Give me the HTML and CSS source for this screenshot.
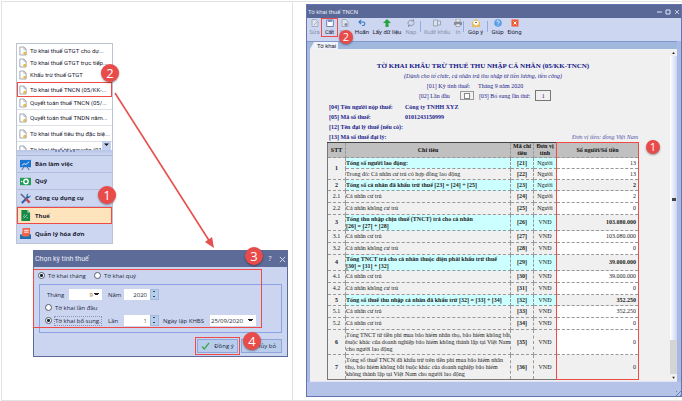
FILE: index.html
```html
<!DOCTYPE html>
<html lang="vi">
<head>
<meta charset="utf-8">
<title>Tờ khai thuế TNCN</title>
<link rel="stylesheet" href="styles.css">
</head>
<body>
<svg class="defs" aria-hidden="true">
  <symbol id="doc" viewBox="0 0 9 10"><path d="M1 .5h4.500L8 3v6.500H1z" fill="#fff" stroke="#7f8796" stroke-width=".8"/><path d="M5.500.5V3H8" fill="none" stroke="#7f8796" stroke-width=".6"/><circle cx="6.500" cy="7.500" r="1.700" fill="#e9b949"/></symbol>
</svg>
<main class="guide">
  <section class="cell steps">
    <nav class="panel">
      <ul class="forms">
        <li><a href="#f1"><svg><use href="#doc"/></svg>Tờ khai thuế GTGT cho dự...</a></li>
        <li><a href="#f2"><svg><use href="#doc"/></svg>Tờ khai thuế GTGT trực tiếp...</a></li>
        <li><a href="#f3"><svg><use href="#doc"/></svg>Khấu trừ thuế GTGT</a></li>
        <li class="marked"><a href="#f4"><svg><use href="#doc"/></svg>Tờ khai thuế TNCN (05/KK-...</a></li>
        <li><a href="#f5"><svg><use href="#doc"/></svg>Quyết toán thuế TNCN (05/...</a></li>
        <li class="split"><a href="#f6"><svg><use href="#doc"/></svg>Quyết toán thuế TNDN năm...</a></li>
        <li class="split"><a href="#f7"><svg><use href="#doc"/></svg>Tờ khai thuế tiêu thụ đặc biệ...</a></li>
        <li class="split"><a href="#f8"><svg><use href="#doc"/></svg>Tờ khai thuế tài nguyên (01...</a></li>
      </ul>
      <button class="more" aria-label="Cuộn xuống"><svg viewBox="0 0 9 9"><path d="M2 2.500h5L4.500 5z" fill="#111"/></svg></button>
      <div class="grip"></div>
      <ul class="modules">
        <li><a href="#m1"><svg viewBox="0 0 12 12"><path d="M0 1h12v8H0z" fill="#1976d2"/><path d="M2 7l2.500-2 2 1L10 3" stroke="#fff" fill="none" stroke-width=".9"/><path d="M4 9l-2 3M8 9l2 3" stroke="#3b5b86"/></svg>Bàn làm việc</a></li>
        <li><a href="#m2"><svg viewBox="0 0 12 12"><path d="M0 2h12v8H0z" fill="#1f9d57"/><circle cx="6.500" cy="6" r="2.400" fill="none" stroke="#fff" stroke-width="1.500"/><circle cx="1.800" cy="6" r=".8" fill="#fff"/></svg>Quỹ</a></li>
        <li><a href="#m3"><svg viewBox="0 0 12 12"><path d="M2 11l7-7" stroke="#2c5fa8" stroke-width="2.200"/><path d="M11.500 2.500L9.500 4 8 2.500 9.500.6A3 3 0 0 0 6.800 3.500L8.500 5.500A3 3 0 0 0 11.500 2.500z" fill="#2c5fa8"/><path d="M1 1l5 5" stroke="#566584" stroke-width="1.600"/><path d="M6.500 6.500l4 4" stroke="#c9495a" stroke-width="2.600"/></svg>Công cụ dụng cụ</a></li>
        <li class="current"><a href="#m4"><svg viewBox="0 0 12 12"><path d="M1.500 0H8l3 3v9H1.500z" fill="#16894a"/><path d="M8 0v3h3z" fill="#8ed0a9"/><path d="M4 9l4-4M4 5.500h1.500M7 8.500h1.500M3.500 7.200h1" stroke="#c4ead3" stroke-width=".8"/></svg>Thuế</a></li>
        <li><a href="#m5"><svg viewBox="0 0 12 12"><path d="M3 0h8v9H2z" fill="#f0644a"/><path d="M4.500 2.500h5M4.500 4.500h5" stroke="#fff"/><path d="M0 7h3l1 2h4l1-2h3v5H0z" fill="#1f6fae"/><path d="M2 7h8v2H2z" fill="#f0644a"/></svg>Quản lý hóa đơn</a></li>
      </ul>
      <span class="badge b-form">2</span>
      <span class="badge b-module">1</span>
    </nav>
    <svg class="arrow" viewBox="0 0 102 158"><path d="M1 1l95 149" stroke="#e5504d" stroke-width="1.600"/><path d="M100 156l-9-6 7-5z" fill="#e5504d"/></svg>
    <form class="dialog">
      <header><h2>Chọn kỳ tính thuế</h2><button type="button" aria-label="Trợ giúp">?</button><button type="button" aria-label="Đóng"><svg viewBox="0 0 8 8"><path d="M1 1l6 6M7 1L1 7" stroke="#e2e6f4"/></svg></button></header>
      <div class="period">
        <label><input type="radio" name="kind" checked>Tờ khai tháng</label>
        <label><input type="radio" name="kind">Tờ khai quý</label>
      </div>
      <fieldset>
        <div class="line">
          <label class="c1" for="month">Tháng</label>
          <select id="month"><option>9</option></select>
          <label class="c2" for="year">Năm</label>
          <span class="spin"><input id="year" type="text" value="2020"><i></i></span>
        </div>
        <div class="line"><label><input type="radio" name="stage">Tờ khai lần đầu</label></div>
        <div class="line">
          <label class="extra"><input type="radio" name="stage" checked><span>Tờ khai bổ sung.</span></label>
          <label class="c2" for="times">Lần</label>
          <span class="spin pale"><input id="times" type="text" value="1"><i></i></span>
          <label class="c3" for="made">Ngày lập KHBS</label>
          <select id="made"><option>25/09/2020</option></select>
        </div>
      </fieldset>
      <footer>
        <button type="button" class="ok"><svg viewBox="0 0 9 8"><path d="M1 4.500L3.300 7 8 1" fill="none" stroke="#3fa653" stroke-width="1.300"/></svg>Đồng ý</button>
        <button type="button" class="cancel">Hủy bỏ</button>
      </footer>
      <div class="mark"></div>
      <span class="badge b-dialog">3</span>
      <span class="badge b-ok">4</span>
    </form>
  </section>

  <section class="cell result">
    <div class="window">
      <header class="bar"><h1>Tờ khai thuế TNCN</h1>
        <button aria-label="Thu nhỏ"><svg viewBox="0 0 6 6"><path d="M1 3h5" stroke="#dfe4f5"/></svg></button>
        <button aria-label="Phóng to"><svg viewBox="0 0 6 6"><path d="M1 1h4v4H1z" fill="none" stroke="#dfe4f5"/></svg></button>
        <button aria-label="Đóng"><svg viewBox="0 0 6 6"><path d="M1 1l4 4M5 1L1 5" stroke="#dfe4f5" stroke-width=".8"/></svg></button>
      </header>
      <div class="tools">
        <button class="off"><svg viewBox="0 0 8 8"><path d="M1 .5h4L7 3v4.500H1z" fill="#dfe3ee" stroke="#a6adbd"/><path d="M3 6l3-3" stroke="#a6adbd"/></svg>Sửa</button>
        <button class="save"><svg viewBox="0 0 8 8"><path d="M.7 1h6.600v6.500H.7z" fill="#fff" stroke="#6d7fae"/><path d="M2 1h4v2H2z" fill="#7d90c4"/></svg>Cất</button>
        <button class="off"><svg viewBox="0 0 8 8"><path d="M1 .5h4L7 3v4.500H1z" fill="#dfe3ee" stroke="#a6adbd"/><circle cx="5" cy="5.500" r="1.500" fill="#858da0"/></svg>Xóa</button>
        <button class="undo"><svg viewBox="0 0 8 8"><path d="M1 3h4.500a1.800 1.800 0 0 1 0 3.500H4M3 1L1 3l2 2" fill="none" stroke="#337dc4" stroke-width="1.100"/></svg>Hoãn</button>
        <button class="fetch"><svg viewBox="0 0 8 8"><path d="M4 0l4 4H5.500v4h-3V4H0z" fill="#27a33b"/></svg>Lấy dữ liệu</button>
        <button class="off load"><svg viewBox="0 0 8 8"><path d="M1.200 5.500A3.200 3.200 0 0 1 6 1.700M6.800 2.500A3.200 3.200 0 0 1 2 6.300M6.500 0v2H4.500M1.500 8V6h2" fill="none" stroke="#8f98ac"/></svg>Nạp</button>
        <span class="sep"></span>
        <button class="off export"><svg viewBox="0 0 8 8"><path d="M.5 1h4v6h-4zM4.500 2h3v4h-3z" fill="#dde2ee" stroke="#9ba4b8"/></svg>Xuất khẩu</button>
        <button class="off print"><svg viewBox="0 0 8 8"><path d="M2 0h4v3H2z" fill="#eee" stroke="#878d9b" stroke-width=".7"/><path d="M0 3h8v3H0z" fill="#878d9b"/><path d="M2 5h4v2.500H2z" fill="#f4f4f4" stroke="#878d9b" stroke-width=".7"/></svg>In</button>
        <span class="sep"></span>
        <button class="talk"><svg viewBox="0 0 8 8"><path d="M0 3l4-3 4 3v5H0z" fill="#e7bd62"/><path d="M1.500 2h5v3L4 6.500 1.500 5z" fill="#fff"/><path d="M3 3.500h2" stroke="#666"/></svg>Góp ý</button>
        <span class="sep"></span>
        <button class="help"><svg viewBox="0 0 8 8"><circle cx="4" cy="4" r="3.800" fill="#5b9ee5"/><path d="M2.800 3a1.200 1.200 0 1 1 1.800 1q-.6.4-.6 1M4 5.700v.8" fill="none" stroke="#fff" stroke-width=".8"/></svg>Giúp</button>
        <button><svg viewBox="0 0 8 8"><path d="M.5.5h7v7h-7z" fill="#ee5b32"/><path d="M2.500 2.500l3 3M5.500 2.500l-3 3" stroke="#fff"/></svg>Đóng</button>
        <span class="badge small b-save">2</span>
      </div>
      <div class="tabs"><span>Tờ khai</span></div>
      <div class="view">
        <article class="sheet">
          <h2>TỜ KHAI KHẤU TRỪ THUẾ THU NHẬP CÁ NHÂN (05/KK-TNCN)</h2>
          <p class="note">(Dành cho tổ chức, cá nhân trả thu nhập từ tiền lương, tiền công)</p>
          <p class="when"><span>[01] Kỳ tính thuế:</span><span>Tháng 9 năm 2020</span></p>
          <p class="turn"><label for="first">[02] Lần đầu</label><span class="box"><input type="checkbox" id="first"></span><label for="nth">[03] Bổ sung lần thứ:</label><input type="text" id="nth" value="1"></p>
          <dl>
            <dt>[04] Tên người nộp thuế:</dt><dd>Công ty TNHH XYZ</dd>
            <dt>[05] Mã số thuế:</dt><dd>0101243150999</dd>
            <dt>[12] Tên đại lý thuế (nếu có):</dt><dd></dd>
            <dt>[13] Mã số thuế đại lý:</dt><dd class="unit">Đơn vị tiền: đồng Việt Nam</dd>
          </dl>
          <div class="grid">
            <table>
              <colgroup><col class="k1"><col><col class="k3"><col class="k4"><col class="k5"></colgroup>
              <thead><tr><th>STT</th><th>Chỉ tiêu</th><th>Mã chỉ tiêu</th><th>Đơn vị tính</th><th>Số người/Số tiền</th></tr></thead>
              <tbody>
                <tr class="sum open"><th rowspan="2">1</th><td>Tổng số người lao động:</td><td>[21]</td><td>Người</td><td>13</td></tr>
                <tr class="sub"><td>Trong đó: Cá nhân cư trú có hợp đồng lao động</td><td>[22]</td><td>Người</td><td>13</td></tr>
                <tr class="sum"><th>2</th><td>Tổng số cá nhân đã khấu trừ thuế [23] = [24] + [25]</td><td>[23]</td><td>Người</td><td>2</td></tr>
                <tr><th>2.1</th><td>Cá nhân cư trú</td><td>[24]</td><td>Người</td><td>2</td></tr>
                <tr><th>2.2</th><td>Cá nhân không cư trú</td><td>[25]</td><td>Người</td><td>0</td></tr>
                <tr class="sum two"><th>3</th><td>Tổng thu nhập chịu thuế (TNCT) trả cho cá nhân<br>[26] = [27] + [28]</td><td>[26]</td><td>VNĐ</td><td>103.080.000</td></tr>
                <tr><th>3.1</th><td>Cá nhân cư trú</td><td>[27]</td><td>VNĐ</td><td>103.080.000</td></tr>
                <tr><th>3.2</th><td>Cá nhân không cư trú</td><td>[28]</td><td>VNĐ</td><td>0</td></tr>
                <tr class="sum two"><th>4</th><td>Tổng TNCT trả cho cá nhân thuộc diện phải khấu trừ thuế<br>[30] = [31] + [32]</td><td>[29]</td><td>VNĐ</td><td>39.000.000</td></tr>
                <tr><th>4.1</th><td>Cá nhân cư trú</td><td>[30]</td><td>VNĐ</td><td>39.000.000</td></tr>
                <tr><th>4.2</th><td>Cá nhân không cư trú</td><td>[31]</td><td>VNĐ</td><td>0</td></tr>
                <tr class="sum"><th>5</th><td>Tổng số thuế thu nhập cá nhân đã khấu trừ [32] = [33] + [34]</td><td>[32]</td><td>VNĐ</td><td>352.250</td></tr>
                <tr><th>5.1</th><td>Cá nhân cư trú</td><td>[33]</td><td>VNĐ</td><td>352.250</td></tr>
                <tr><th>5.2</th><td>Cá nhân cư trú</td><td>[34]</td><td>VNĐ</td><td>0</td></tr>
                <tr class="long"><th>6</th><td>Tổng TNCT từ tiền phí mua bảo hiểm nhân thọ, bảo hiểm không bắt<br>buộc khác của doanh nghiệp bảo hiểm không thành lập tại Việt Nam<br>cho người lao động</td><td>[35]</td><td>VNĐ</td><td>0</td></tr>
                <tr class="long last"><th>7</th><td>Tổng số thuế TNCN đã khấu trừ trên tiền phí mua bảo hiểm nhân<br>thọ, bảo hiểm không bắt buộc khác của doanh nghiệp bảo hiểm<br>không thành lập tại Việt Nam cho người lao động</td><td>[36]</td><td>VNĐ</td><td>0</td></tr>
              </tbody>
            </table>
            <div class="mark"></div>
            <span class="badge small b-col">1</span>
          </div>
        </article>
        <div class="scroll"><b>▲</b><i></i><b>▼</b></div>
      </div>
      <footer class="foot"></footer>
    </div>
  </section>
</main>
</body>
</html>
```

FILE: styles.css
```css
* { box-sizing: border-box; margin: 0; padding: 0; }
body { background: #fff; color: #1c2233; font: 6px/8px Roboto, "Noto Sans", sans-serif; }
button, input, select { font: inherit; color: inherit; border: 0; border-radius: 0; background: none; appearance: none; }
ul { list-style: none; }
a { color: inherit; text-decoration: none; }
h1, h2 { font: inherit; }
.defs { display: block; width: 0; height: 0; position: absolute; }

.guide { display: grid; grid-template-columns: 290px minmax(0, 1fr); margin: 1px 0 1px 1px; border: 1px solid #e2e2e2; border-right: 0; }
.cell { position: relative; }
.result { border-left: 1px solid #e2e2e2; padding: 2px 0 3px 13px; }
.steps { padding: 41px 4px 0 14px; }

.badge { position: absolute; z-index: 3; width: 18px; height: 18px; border-radius: 50%; background: #e94b4a; color: #fff; font: 13px/18px "Open Sans", sans-serif; text-align: center; box-shadow: 0 1px 2px #0006; }
.badge.small { width: 14px; height: 14px; font-size: 11px; line-height: 14px; }
.mark { position: absolute; z-index: 2; border: 1px solid #f04a46; pointer-events: none; }

.panel { position: relative; width: 97px; border: 1px solid #bcc3d2; background: #ccd6f0; }
.forms { height: 106px; overflow: hidden; background: #fff; white-space: nowrap; padding-top: 1px; }
.forms li { height: 12px; display: flex; align-items: center; }
.forms .split { height: 16px; border-top: 1px solid #dcdfe6; }
.forms .marked { height: 15px; margin-top: 1px; border: 1px solid #f04a46; }
.forms a { display: flex; align-items: center; gap: 3px; padding-left: 2px; }
.forms .marked a { padding-left: 1px; }
.forms svg { width: 8px; height: 10px; flex: none; }
.more { position: absolute; right: 1px; top: 97px; width: 9px; height: 9px; background: #c4d0f0; }
.more svg { display: block; width: 9px; height: 9px; }
.grip { height: 6px; background: linear-gradient(#b8c5e6, #ccd6f0); border-bottom: 1px solid #a8b6dc; }
.grip::before { content: ""; display: block; width: 20px; margin: auto; border-top: 2px dotted #8393bd; }
.modules { font-family: "Open Sans", sans-serif; font-weight: 700; }
.modules li { height: 17px; display: flex; align-items: center; padding-left: 3px; border-bottom: 1px solid #b2bfe2; }
.modules li:last-child { height: 19px; border: 0; }
.modules .current { background: #fde4bd; border: 1px solid #f04a46; padding-left: 2px; }
.modules a { display: flex; align-items: center; gap: 4px; }
.modules svg { width: 11px; height: 11px; }
.b-form { left: 84px; top: 20px; }
.b-module { left: 81px; top: 142px; }
.arrow { position: absolute; z-index: 2; left: 112px; top: 90px; width: 102px; height: 158px; }

.dialog { position: relative; margin: 6px 0 0 17px; height: 107px; border: 1px solid #5d6b99; background: #cbd5f0; color: #232a3d; font-family: "Open Sans", sans-serif; }
.dialog header { height: 16px; display: flex; align-items: center; gap: 4px; padding: 0 1px; background: #5d6b99; color: #e8ebf6; font-size: 7px; }
.dialog header h2 { flex: 1; font-family: Roboto, sans-serif; }
.dialog header button { width: 8px; height: 8px; display: grid; place-items: center; }
.dialog header svg { width: 7px; height: 7px; }
.dialog label { flex: none; display: flex; align-items: center; gap: 3px; white-space: nowrap; }
.dialog [type=radio] { flex: none; width: 7px; height: 7px; border: 1px solid #555d70; border-radius: 50%; background: #fff; }
.dialog [type=radio]:checked { background: radial-gradient(#1c2233 35%, #fff 50%); }
.period { display: flex; gap: 8px; height: 17px; padding-left: 4px; }
.period label:first-child { width: 48px; }
.dialog fieldset { margin: 0 5px; height: 49px; border: 1px solid #8ba3e4; padding: 3px 0 0 5px; }
.line { display: flex; align-items: center; height: 13px; }
.line .c1 { width: 24px; padding-left: 2px; }
.line .c2 { width: 16px; }
.line .c3 { width: 47px; margin-left: 4px; }
.dialog select { height: 11px; padding: 0 9px 0 2px; background: linear-gradient(#222 0 0) right 3px top 4px / 5px 1px no-repeat, linear-gradient(#222 0 0) right 4px top 5px / 3px 1px no-repeat, #fff; }
.dialog #month { width: 33px; margin-right: 6px; text-align: right; text-align-last: right; color: #9b5a23; }
.dialog #made { width: 46px; padding-left: 1px; }
.spin { display: flex; width: 35px; height: 11px; background: #fff; }
.spin input { flex: 1; min-width: 0; text-align: right; padding-right: 3px; }
.pale input { color: #666; }
.spin i { width: 9px; background: radial-gradient(#345 1px, #0000 1px) 0 -1px / 7px 5px, #b7cdec; border: 1px solid #a3b9de; }
.extra { width: 63px; }
.extra span { outline: 1px dotted #8d97b5; }
.dialog footer { display: flex; justify-content: flex-end; gap: 3px; padding: 6px 5px 0; }
.dialog footer button { width: 41px; height: 14px; display: flex; align-items: center; justify-content: center; gap: 4px; background: #b9ccec; border: 1px solid #8fa7d8; }
.dialog footer .ok { outline: 1px solid #f04a46; outline-offset: 1px; }
.dialog footer .cancel { justify-content: flex-end; padding-right: 5px; }
.dialog footer svg { width: 9px; height: 8px; }
.dialog .mark { left: -1px; right: 25px; top: 18px; height: 59px; }
.b-dialog { right: 24px; top: -4px; }
.b-ok { right: 26px; top: 81px; }

.window { border: 1px solid #6575ad; background: #aab9e3; }
.bar { height: 13px; display: flex; align-items: center; gap: 3px; padding: 0 1px; background: #596896; color: #e3e7f4; }
.bar h1 { flex: 1; }
.bar button, .bar svg { width: 6px; height: 6px; display: block; }
.tools { position: relative; display: flex; align-items: flex-start; height: 23px; padding-top: 1px; background: #ccd6f1; }
.tools button { width: 15px; display: flex; flex-direction: column; align-items: center; gap: 1px; white-space: nowrap; line-height: 7px; }
.tools svg { width: 8px; height: 8px; }
.tools .off { color: #8b94aa; }
.tools .save { height: 17px; outline: 1px solid #f04a46; }
.tools .undo { width: 20px; }
.tools .fetch { width: 30px; }
.tools .load { width: 18px; }
.tools .export { width: 32px; }
.tools .print { width: 10px; }
.tools .talk { width: 23px; }
.tools .help { width: 19px; }
.tools .sep { width: 1px; height: 11px; margin-top: 2px; background: #8daee0; }
.b-save { left: 32px; top: 12px; }
.tabs { height: 8px; padding-left: 3px; background: #a0b7de; border-top: 1px solid #8298cc; margin-right: 4px; }
.tabs span { display: block; width: 28px; height: 7px; padding-left: 7px; background: #f0f3fa; clip-path: polygon(4px 0, 100% 0, 100% 100%, 0 100%); line-height: 7px; white-space: nowrap; }
.view { display: flex; margin: 0 4px 0 3px; border-bottom: 1px solid #dfe5f5; background: #f0f0f0; }
.scroll { width: 7px; display: flex; flex-direction: column; background: #d5d5d5; font-size: 4px; line-height: 7px; text-align: center; color: #111; }
.scroll b { background: #f0f0f0; height: 7px; }
.scroll i { height: 284px; background: linear-gradient(#444 0 0) center 142px / 4px 3px no-repeat, linear-gradient(90deg, #fff, #cad5f3); }
.scroll b:last-child { margin-top: auto; }
.foot { height: 14px; background: repeating-linear-gradient(135deg, #6d7fb8 0 1px, #0000 1px 3px) right bottom / 5px 5px no-repeat, #b6c3e9; }

.sheet { flex: 1; min-width: 0; padding: 12px 31px 1px 17px; font: 6px/8px "Liberation Serif", serif; color: #22228c; white-space: nowrap; }
.sheet h2 { font-size: 7px; line-height: 10px; font-weight: 700; text-align: center; color: #14148a; }
.note { font-style: italic; text-align: center; line-height: 10px; }
.when { display: flex; justify-content: center; gap: 8px; line-height: 10px; padding-right: 16px; }
.turn { display: flex; justify-content: center; align-items: center; height: 9px; padding-left: 4px; }
.turn .box { display: grid; place-items: center; width: 14px; height: 9px; margin: 0 5px 0 10px; border: 1px solid #999; }
.turn .box input { width: 6px; height: 6px; border: 1px solid #888; background: #fff; }
.turn [type=text] { width: 16px; height: 11px; margin-left: 5px; border: 1px solid #777; text-align: center; }
.sheet dl { display: grid; grid-template-columns: 76px 1fr; padding: 2px 1px 0 2px; line-height: 10px; font-weight: 700; }
.sheet .unit { font-weight: 400; font-style: italic; text-align: right; color: #5555a8; }
.grid { position: relative; color: #222; }
table { width: 100%; table-layout: fixed; border-collapse: collapse; border: 1px solid #777; border-top-color: #444; }
.k1 { width: 18px; } .k3 { width: 23px; } .k4 { width: 23px; } .k5 { width: 82px; }
tr { height: 12px; }
tr.sub, tr.sum { height: 11px; }
tr.two { height: 16px; }
tr.long { height: 25px; }
th, td { border: 1px dashed #999; font-weight: 400; line-height: 7px; text-align: center; }
td:nth-last-child(4) { text-align: left; }
td:last-child { text-align: right; padding-right: 2px; background: #fff; }
.sum td { background: #ccffff; font-weight: 700; }
.sum th { font-weight: 700; }
.sum td:nth-last-child(2) { font-weight: 400; }
.sum td:last-child, .last td:last-child { background: #f0f0f0; }
.open td:last-child { background: #fff; font-weight: 400; }
.long th, td:nth-last-child(3) { font-weight: 700; }
thead tr { height: 15px; }
thead th { background: #c0c0c0; font-weight: 700; white-space: normal; color: #111; }
.grid .mark { right: 0; top: 0; bottom: 0; width: 83px; }
.b-col { right: -21px; top: -2px; }
```
